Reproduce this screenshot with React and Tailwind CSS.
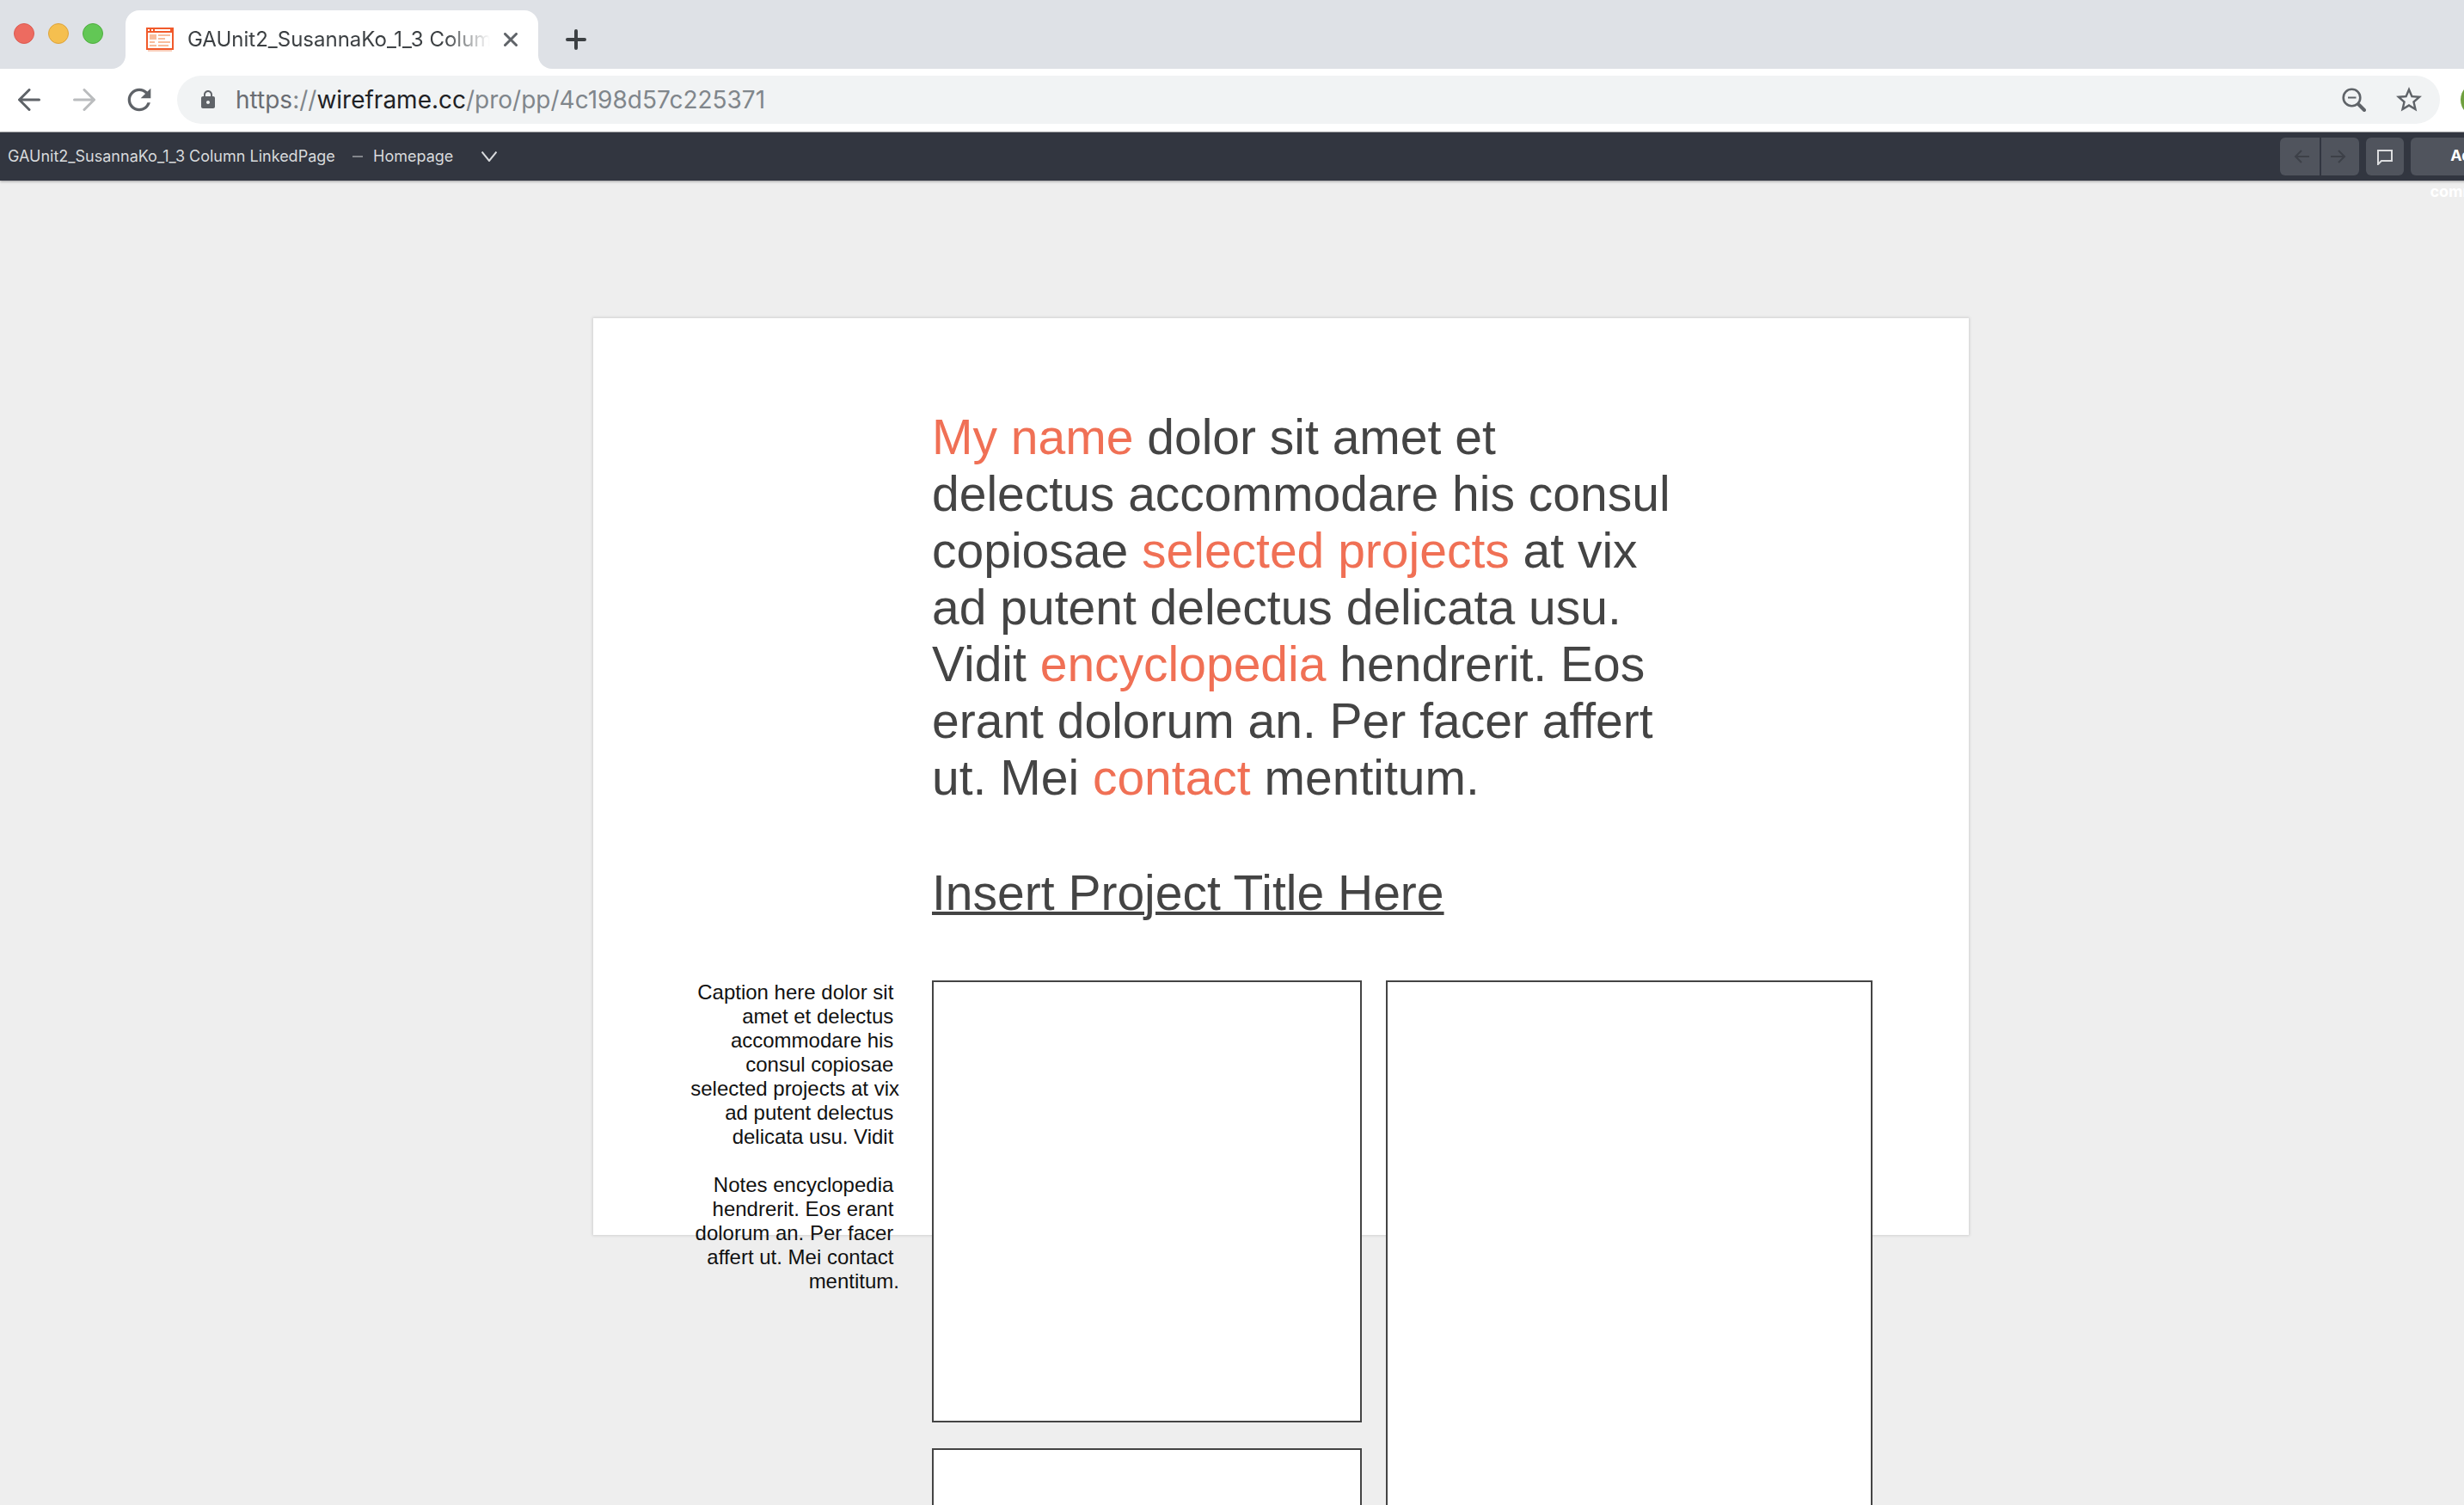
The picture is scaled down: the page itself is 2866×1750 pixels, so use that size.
import { MdLock, MdRefresh, MdStarBorder } from "react-icons/md";

const captionLines = [
  "Caption here dolor sit\u00a0",
  "amet et delectus\u00a0",
  "accommodare his\u00a0",
  "consul copiosae\u00a0",
  "selected projects at vix",
  "ad putent delectus\u00a0",
  "delicata usu. Vidit\u00a0",
];

const noteLines = [
  "Notes encyclopedia\u00a0",
  "hendrerit. Eos erant\u00a0",
  "dolorum an. Per facer\u00a0",
  "affert ut. Mei contact\u00a0",
  "mentitum.",
];

function Arrow({ flip, className }) {
  return (
    <svg
      viewBox="0 0 26 26"
      className={className}
      fill="none"
      stroke="currentColor"
      strokeWidth="3"
      strokeLinecap="round"
      strokeLinejoin="round"
      aria-hidden="true"
    >
      <path d={flip ? "M1.5 13H24M13 1.5L24.5 13L13 24.5" : "M24.5 13H2M13 1.5L1.5 13L13 24.5"} />
    </svg>
  );
}

function ThinArrow({ flip }) {
  return (
    <svg width="18" height="16" viewBox="0 0 18 16" fill="none" stroke="currentColor" strokeWidth="2" aria-hidden="true">
      <path d={flip ? "M0 8H16M9 1L16 8L9 15" : "M18 8H2M9 1L2 8L9 15"} />
    </svg>
  );
}

function Favicon() {
  return (
    <svg width="32" height="28" viewBox="0 0 32 28" className="shrink-0" aria-hidden="true">
      <path fill="#fad0bd" d="M2 26h28v2H2z" />
      <path fill="#f15a2b" d="M0 0h32v26H0z" />
      <path fill="#fff" d="M2 2h2v2H2zM6 2h2v2H6zM10 2h18v2H10zM2 6h28v18H2z" />
      <path fill="#f8bd9c" d="M4 8h8v6H4zM14 8h14v2H14zM14 12h8v2h-8zM4 16h6v2H4zM14 16h14v2H14zM4 20h8v2H4zM14 20h12v2H14z" />
    </svg>
  );
}

function BrowserTabs() {
  return (
    <div className="flex h-20 items-end bg-[#dee1e6]">
      <div className="flex h-20 w-[130px] shrink-0 items-start gap-4 pl-4 pt-[27px]">
        <button aria-label="Close window" className="size-6 rounded-full border border-[#dc5a51] bg-[#ed6b60]" />
        <button aria-label="Minimize window" className="size-6 rounded-full border border-[#dda33c] bg-[#f5bf4f]" />
        <button aria-label="Zoom window" className="size-6 rounded-full border border-[#4fae3f] bg-[#62c755]" />
      </div>
      <div className="size-4 shrink-0 bg-white">
        <div className="size-4 rounded-br-2xl bg-[#dee1e6]" />
      </div>
      <div className="flex h-[68px] w-[480px] shrink-0 items-center rounded-t-2xl bg-white pl-6 pr-4">
        <Favicon />
        <span className="ml-4 w-[352px] overflow-hidden whitespace-nowrap text-2xl text-[#3c4043] [mask-image:linear-gradient(to_right,black_85%,transparent)]">
          GAUnit2_SusannaKo_1_3 Column LinkedPage
        </span>
        <button aria-label="Close tab" className="ml-4 text-[#5f6368]">
          <svg width="16" height="16" viewBox="0 0 16 16" stroke="currentColor" strokeWidth="3" strokeLinecap="round" aria-hidden="true">
            <path d="M1.5 1.5l13 13M14.5 1.5l-13 13" />
          </svg>
        </button>
      </div>
      <div className="size-4 shrink-0 bg-white">
        <div className="size-4 rounded-bl-2xl bg-[#dee1e6]" />
      </div>
      <button aria-label="New tab" className="mb-[22px] ml-4 text-[#3c4043]">
        <svg width="24" height="24" viewBox="0 0 24 24" stroke="currentColor" strokeWidth="4" strokeLinecap="round" aria-hidden="true">
          <path d="M12 2v20M2 12h20" />
        </svg>
      </button>
    </div>
  );
}

function AddressBar() {
  return (
    <div className="flex h-[74px] items-center border-b border-[#a9aaad] bg-white pb-px pl-[21px] text-[#5f6368]">
      <button aria-label="Back" className="shrink-0">
        <Arrow className="size-[26px]" />
      </button>
      <button aria-label="Forward" className="ml-[38px] shrink-0 text-[#babcbe]">
        <Arrow flip className="size-[26px]" />
      </button>
      <button aria-label="Reload" className="ml-[31px] shrink-0">
        <MdRefresh size={40} />
      </button>
      <div className="ml-6 flex h-14 flex-1 items-center rounded-full bg-[#f1f3f4] pl-6 pr-[18px]">
        <MdLock size={24} className="shrink-0" />
        <a href="#page" className="ml-5 flex-1 text-[28px] leading-9 text-[#80868b]">
          <span className="text-[#6a6d72]">https</span>://<span className="text-[#202124]">wireframe.cc</span>/pro/pp/4c198d57c225371
        </a>
        <button aria-label="Zoom" className="shrink-0">
          <svg width="28" height="28" viewBox="0 0 28 28" fill="none" stroke="currentColor" aria-hidden="true">
            <circle cx="11.5" cy="11.5" r="9.8" strokeWidth="2.6" />
            <path d="M7 11.5h9.500" strokeWidth="2" />
            <path d="M18 18l2 2" strokeWidth="2.6" />
            <path d="M20 20l6 6" strokeWidth="4" strokeLinecap="round" />
          </svg>
        </button>
        <button aria-label="Bookmark" className="ml-8 shrink-0">
          <MdStarBorder size={36} />
        </button>
      </div>
      <button aria-label="Profile" className="-mr-9 ml-6 size-10 shrink-0 rounded-full bg-[#6fa03f]" />
    </div>
  );
}

function AppBar() {
  return (
    <header className="relative flex h-14 items-start bg-[#323640] pl-[9px] pr-12 pt-1.5 text-lg text-[#d8dadc] shadow-[0_1px_3px_rgba(0,0,0,0.35)]">
      <div className="flex h-11 items-center leading-6">
        <span className="w-[401px] whitespace-nowrap">GAUnit2_SusannaKo_1_3 Column LinkedPage</span>
        <span className="h-0.5 w-3 bg-[#83868c]" />
        <span className="ml-3 w-[94px]">Homepage</span>
        <button aria-label="Choose page" className="ml-8">
          <svg width="18" height="12" viewBox="0 0 18 12" fill="none" stroke="currentColor" strokeWidth="2" aria-hidden="true">
            <path d="M.5.5L9 11L17.500.5" />
          </svg>
        </button>
      </div>
      <div className="ml-auto flex h-11 gap-2 text-[#3d4048]">
        <div className="flex gap-0.5">
          <button aria-label="Undo" className="flex w-[46px] items-center justify-center rounded-l-md bg-[#50545d] pl-1">
            <ThinArrow />
          </button>
          <button aria-label="Redo" className="flex w-11 items-center justify-center rounded-r-md bg-[#50545d] pr-1">
            <ThinArrow flip />
          </button>
        </div>
        <button aria-label="Comments" className="flex w-11 items-center justify-center rounded-md bg-[#50545d] pt-0.5 text-[#dcdddf]">
          <svg width="18" height="18" viewBox="0 0 18 18" fill="none" stroke="currentColor" strokeWidth="2" aria-hidden="true">
            <path d="M1 1h16v12H5L1 17z" />
          </svg>
        </button>
        <button className="flex w-32 flex-col items-center rounded-md bg-[#50545d] font-bold leading-[42px] text-white">
          <span>Add</span>
          <span>comment</span>
        </button>
      </div>
    </header>
  );
}

function Artboard() {
  return (
    <article className="h-[1066px] w-[1600px] shrink-0 bg-white pt-[105px] font-['Liberation_Sans',Arial,sans-serif] text-[#444] shadow-[0_0_3px_1px_rgba(0,0,0,0.12)]">
      <div className="ml-[394px] text-[57px] leading-[66px]">
        <p className="w-[880px]">
          <a href="#name" className="text-[#f07055]">My name</a> dolor sit amet et<br />
          delectus accommodare his consul<br />
          copiosae <a href="#projects" className="text-[#f07055]">selected projects</a> at vix<br />
          ad putent delectus delicata usu.<br />
          Vidit <a href="#encyclopedia" className="text-[#f07055]">encyclopedia</a> hendrerit. Eos<br />
          erant dolorum an. Per facer affert<br />
          ut. Mei <a href="#contact" className="text-[#f07055]">contact</a> mentitum.
        </p>
        <h1 className="mt-[68px] underline decoration-4">Insert Project Title Here</h1>
      </div>
      <div className="mt-[69px] flex items-start">
        <div className="w-[356px] whitespace-pre-line text-right text-2xl leading-7 text-[#111]">
          <p>{captionLines.join("\n")}</p>
          <p className="mt-7">{noteLines.join("\n")}</p>
        </div>
        <div className="ml-[38px] flex gap-7">
          <div className="flex flex-col gap-[30px]">
            <div className="h-[514px] w-[500px] border-2 border-[#444] bg-white" />
            <div className="h-[514px] w-[500px] border-2 border-[#444] bg-white" />
          </div>
          <div className="w-[566px] border-2 border-[#444] bg-white" />
        </div>
      </div>
    </article>
  );
}

export default function App() {
  return (
    <div className="flex h-screen flex-col overflow-hidden bg-[#eee] font-[Inter,sans-serif]">
      <BrowserTabs />
      <AddressBar />
      <div className="-mr-[114px] flex min-h-0 flex-1 flex-col">
        <AppBar />
        <main className="flex min-h-0 flex-1 items-start justify-center overflow-hidden pt-40">
          <Artboard />
        </main>
      </div>
    </div>
  );
}
